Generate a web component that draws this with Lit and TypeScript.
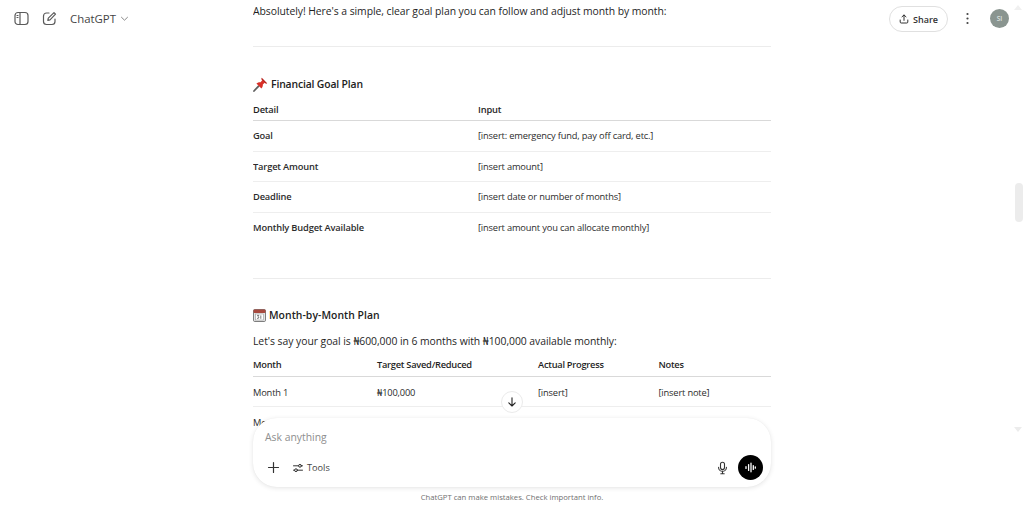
import { LitElement, html, css } from "lit";
import { customElement } from "lit/decorators.js";

const goalRows = [
  ["Goal", "[insert: emergency fund, pay off card, etc.]"],
  ["Target Amount", "[insert amount]"],
  ["Deadline", "[insert date or number of months]"],
  ["Monthly Budget Available", "[insert amount you can allocate monthly]"],
];

@customElement("app-root")
export class AppRoot extends LitElement {
  static styles = css`
    :host {
      display: block;
      position: relative;
      width: 1024px;
      height: 509px;
      overflow: hidden;
      background: #fff;
      color: #1f1f1f;
      font-family: "Open Sans", "Noto Sans", "Liberation Sans", sans-serif;
      font-size: 10px;
    }
    .thread {
      width: 518px;
      margin: 0 auto;
      height: 509px;
      overflow: hidden;
    }
    .intro {
      height: 46px;
      line-height: 22px;
      border-bottom: 1px solid #ececec;
      font-size: 10.4px;
      letter-spacing: -0.06px;
    }
    h3 {
      margin: 0;
      display: flex;
      align-items: center;
      gap: 3px;
      font-size: 10.4px;
      font-weight: 600;
      height: 18px;
      color: #222;
    }
    h3 svg { flex: none; }
    .goal-h { margin-top: 28px; letter-spacing: -0.15px; }
    table {
      width: 518px;
      border-collapse: collapse;
      table-layout: fixed;
      font-size: 9.3px;
      letter-spacing: -0.17px;
    }
    th {
      text-align: left;
      font-weight: 600;
      border-bottom: 1px solid #d9d9d9;
      padding: 0;
    }
    td {
      padding: 0;
      border-bottom: 1px solid #eeeeee;
      color: #2c2c2c;
    }
    td.key { font-weight: 600; }
    tr:last-child td { border-bottom: 0; }
    .goal { margin-top: 6px; }
    .goal th { height: 21px; }
    .goal td { height: 29.5px; }
    .goal col.a { width: 225px; }
    .rule {
      height: 1px;
      background: #ececec;
      margin-top: 36px;
    }
    .month-h { margin-top: 27px; letter-spacing: 0.05px; }
    .lead {
      margin: 8px 0 0;
      line-height: 18px;
      font-size: 10.4px;
      letter-spacing: -0.05px;
    }
    .month { margin-top: 2px; }
    .month th { height: 24px; letter-spacing: -0.27px; }
    .month td { height: 27px; padding-top: 2px; }
    .month col.a { width: 124px; }
    .month col.b { width: 161px; }
    .month col.c { width: 120.5px; }

    .top-left {
      position: absolute;
      left: 14px;
      top: 10px;
      display: flex;
      align-items: center;
      height: 16px;
      color: #555;
    }
    .top-left svg { display: block; }
    .pen { margin-left: 13px; }
    .brand { margin-left: 13px; font-size: 11.4px; color: #444; }
    .caret { margin-left: 4px; }
    .share {
      position: absolute;
      left: 889px;
      top: 6px;
      width: 59px;
      height: 26px;
      box-sizing: border-box;
      border: 1px solid #e0e0e0;
      border-radius: 13px;
      background: #fff;
      display: flex;
      align-items: center;
      justify-content: center;
      gap: 4px;
      font-size: 9px;
      font-weight: 600;
      color: #333;
    }
    .dots { position: absolute; left: 965px; top: 12px; }
    .avatar {
      position: absolute;
      left: 990px;
      top: 9px;
      width: 19px;
      height: 19px;
      border-radius: 50%;
      background: #8a9590;
      color: #dfe5e2;
      font-size: 6.5px;
      font-weight: 600;
      display: flex;
      align-items: center;
      justify-content: center;
    }
    .thumb {
      position: absolute;
      left: 1015px;
      top: 183px;
      width: 8px;
      height: 39px;
      border-radius: 4px;
      background: #ececec;
    }
    .sb-arrow {
      position: absolute;
      left: 1014px;
      top: 427px;
      width: 0;
      height: 0;
      border-left: 4px solid transparent;
      border-right: 4px solid transparent;
      border-top: 5px solid #ececec;
    }
    .sb-arrow-up {
      position: absolute;
      left: 1014px;
      top: 5px;
      width: 0;
      height: 0;
      border-left: 4px solid transparent;
      border-right: 4px solid transparent;
      border-bottom: 5px solid #f0f0f0;
    }
    .down {
      position: absolute;
      left: 501px;
      top: 391px;
      width: 22px;
      height: 22px;
      box-sizing: border-box;
      border: 1px solid #ebebeb;
      border-radius: 50%;
      background: #fff;
      display: flex;
      align-items: center;
      justify-content: center;
    }
    .composer {
      position: absolute;
      left: 253px;
      top: 418px;
      width: 518px;
      height: 69px;
      box-sizing: border-box;
      background: #fff;
      border-radius: 24px;
      box-shadow: 0 1px 5px rgba(0, 0, 0, 0.11), 0 0 1px rgba(0, 0, 0, 0.06);
      padding: 12px 8px 7px 13px;
      display: flex;
      flex-direction: column;
      justify-content: space-between;
    }
    .ask { font-size: 10.4px; color: #8e8e8e; line-height: 14px; margin-left: -1px; }
    .tools-row { display: flex; align-items: center; }
    .plus { display: block; margin-right: 11px; }
    .tools { display: flex; align-items: center; gap: 3px; font-size: 9.2px; color: #444; }
    .spacer { flex: 1; }
    .voice {
      width: 25px;
      height: 25px;
      border-radius: 50%;
      background: #000;
      display: flex;
      align-items: center;
      justify-content: center;
      margin-left: 9px;
    }
    .foot {
      position: absolute;
      left: 0;
      right: 0;
      top: 487px;
      height: 22px;
      text-align: center;
      font-size: 7.7px;
      line-height: 21px;
      color: #707070;
    }
  `;

  render() {
    return html`
      <div class="thread">
        <div class="intro">Absolutely! Here's a simple, clear goal plan you can follow and adjust month by month:</div>
        <h3 class="goal-h">
          <svg width="15" height="15" viewBox="0 0 15 15">
            <path d="M1 14 L5.6 9.2" stroke="#5f5f5f" stroke-width="1.8" stroke-linecap="round" />
            <path d="M3.4 6.6 C5 5.2 6.4 5 7.6 5.2 L9.4 3 L12 5.6 L9.8 7.6 C10 9 9.6 10.4 8.4 11.4 Z" fill="#d92f27" />
            <path d="M8.8 0.8 L14.2 6.2 C13.6 6.9 12.6 6.8 12 6.1 L8.9 3 C8.3 2.4 8.2 1.4 8.8 0.8 Z" fill="#b8211b" />
          </svg>
          Financial Goal Plan
        </h3>
        <table class="goal">
          <colgroup><col class="a" /><col /></colgroup>
          <thead><tr><th>Detail</th><th>Input</th></tr></thead>
          <tbody>
            ${goalRows.map(([k, v]) => html`<tr><td class="key">${k}</td><td>${v}</td></tr>`)}
          </tbody>
        </table>
        <div class="rule"></div>
        <h3 class="month-h">
          <svg width="13" height="13" viewBox="0 0 13 13">
            <rect x="0.5" y="0.5" width="12" height="12" rx="1.2" fill="#e6e6e6" stroke="#5f5f5f" stroke-width="0.8" />
            <rect x="0.5" y="0.5" width="12" height="3.4" rx="1" fill="#a8493e" />
            <rect x="2.6" y="5" width="7.8" height="6" fill="#fff" stroke="#8a8a8a" stroke-width="0.5" />
            <path d="M4 6.4 h1.8 l-0.8 1.3 q1 0.3 0.8 1.2 q-0.6 1 -1.8 0.3 M7.8 6.4 v3.4" stroke="#444" stroke-width="0.7" fill="none" />
          </svg>
          Month-by-Month Plan
        </h3>
        <p class="lead">Let's say your goal is ₦600,000 in 6 months with ₦100,000 available monthly:</p>
        <table class="month">
          <colgroup><col class="a" /><col class="b" /><col class="c" /><col /></colgroup>
          <thead><tr><th>Month</th><th>Target Saved/Reduced</th><th>Actual Progress</th><th>Notes</th></tr></thead>
          <tbody>
            <tr><td>Month 1</td><td>₦100,000</td><td>[insert]</td><td>[insert note]</td></tr>
            <tr><td>Month 2</td><td></td><td></td><td></td></tr>
          </tbody>
        </table>
      </div>

      <div class="top-left">
        <svg width="15" height="15" viewBox="0 0 15 15" fill="none" stroke="#5a5a5a" stroke-width="1.2">
          <rect x="1" y="1.5" width="13" height="12" rx="3" />
          <path d="M6 1.5 V13.5" />
          <path d="M3 4.5 H4 M3 6.5 H4" stroke-linecap="round" />
        </svg>
        <svg class="pen" width="15" height="15" viewBox="0 0 15 15" fill="none" stroke="#5a5a5a" stroke-width="1.2" stroke-linecap="round" stroke-linejoin="round">
          <path d="M7 2 H4.5 A3 3 0 0 0 1.5 5 V10.5 A3 3 0 0 0 4.5 13.5 H10 A3 3 0 0 0 13 10.5 V8" />
          <path d="M12 1.6 L13.5 3.1 L8 8.8 L5.8 9.3 L6.3 7.1 Z" />
        </svg>
        <span class="brand">ChatGPT</span>
        <svg class="caret" width="9" height="9" viewBox="0 0 9 9" fill="none" stroke="#888" stroke-width="1">
          <path d="M1.2 3 L4.5 6.2 L7.8 3" />
        </svg>
      </div>
      <div class="share">
        <svg width="10" height="10" viewBox="0 0 10 10" fill="none" stroke="#333" stroke-width="1" stroke-linecap="round" stroke-linejoin="round">
          <path d="M5 6.4 V1 M3 2.8 L5 1 L7 2.8" />
          <path d="M1.2 6 V8 A1 1 0 0 0 2.2 9 H7.8 A1 1 0 0 0 8.8 8 V6" />
        </svg>
        Share
      </div>
      <svg class="dots" width="5" height="13" viewBox="0 0 5 13" fill="#444">
        <circle cx="2.5" cy="2" r="1.1" /><circle cx="2.5" cy="6.5" r="1.1" /><circle cx="2.5" cy="11" r="1.1" />
      </svg>
      <div class="avatar">SI</div>

      <div class="sb-arrow-up"></div>
      <div class="thumb"></div>
      <div class="sb-arrow"></div>

      <div class="down">
        <svg width="12" height="12" viewBox="0 0 12 12" fill="none" stroke="#222" stroke-width="1.1" stroke-linecap="round" stroke-linejoin="round">
          <path d="M6 1.8 V10 M2.8 6.8 L6 10 L9.2 6.8" />
        </svg>
      </div>

      <div class="composer">
        <div class="ask">Ask anything</div>
        <div class="tools-row">
          <svg class="plus" width="15" height="15" viewBox="0 0 15 15" fill="none" stroke="#333" stroke-width="1.2" stroke-linecap="round">
            <path d="M7.5 2.5 V12.5 M2.5 7.5 H12.5" />
          </svg>
          <div class="tools">
            <svg width="12" height="12" viewBox="0 0 12 12" fill="none" stroke="#333" stroke-width="1" stroke-linecap="round">
              <path d="M1.5 3.8 H6.5 M9.5 3.8 H10.5 M1.5 8.2 H2.5 M5.5 8.2 H10.5" />
              <circle cx="8" cy="3.8" r="1.4" /><circle cx="4" cy="8.2" r="1.4" />
            </svg>
            Tools
          </div>
          <div class="spacer"></div>
          <svg width="13" height="14" viewBox="0 0 13 14" fill="none" stroke="#333" stroke-width="1.1" stroke-linecap="round">
            <rect x="4.5" y="1.2" width="4" height="7.4" rx="2" />
            <path d="M2.6 6.4 A3.9 3.9 0 0 0 10.4 6.4 M6.5 10.4 V12.6 M4.8 12.8 H8.2" />
          </svg>
          <div class="voice">
            <svg width="13" height="13" viewBox="0 0 13 13" fill="none" stroke="#fff" stroke-width="1.3" stroke-linecap="round">
              <path d="M2 5.6 V7.4 M4.6 3.6 V9.4 M7 2.2 V10.8 M9.3 4.6 V8.4 M11.3 5.8 V7.2" />
            </svg>
          </div>
        </div>
      </div>
      <div class="foot">ChatGPT can make mistakes. Check important info.</div>
    `;
  }
}
